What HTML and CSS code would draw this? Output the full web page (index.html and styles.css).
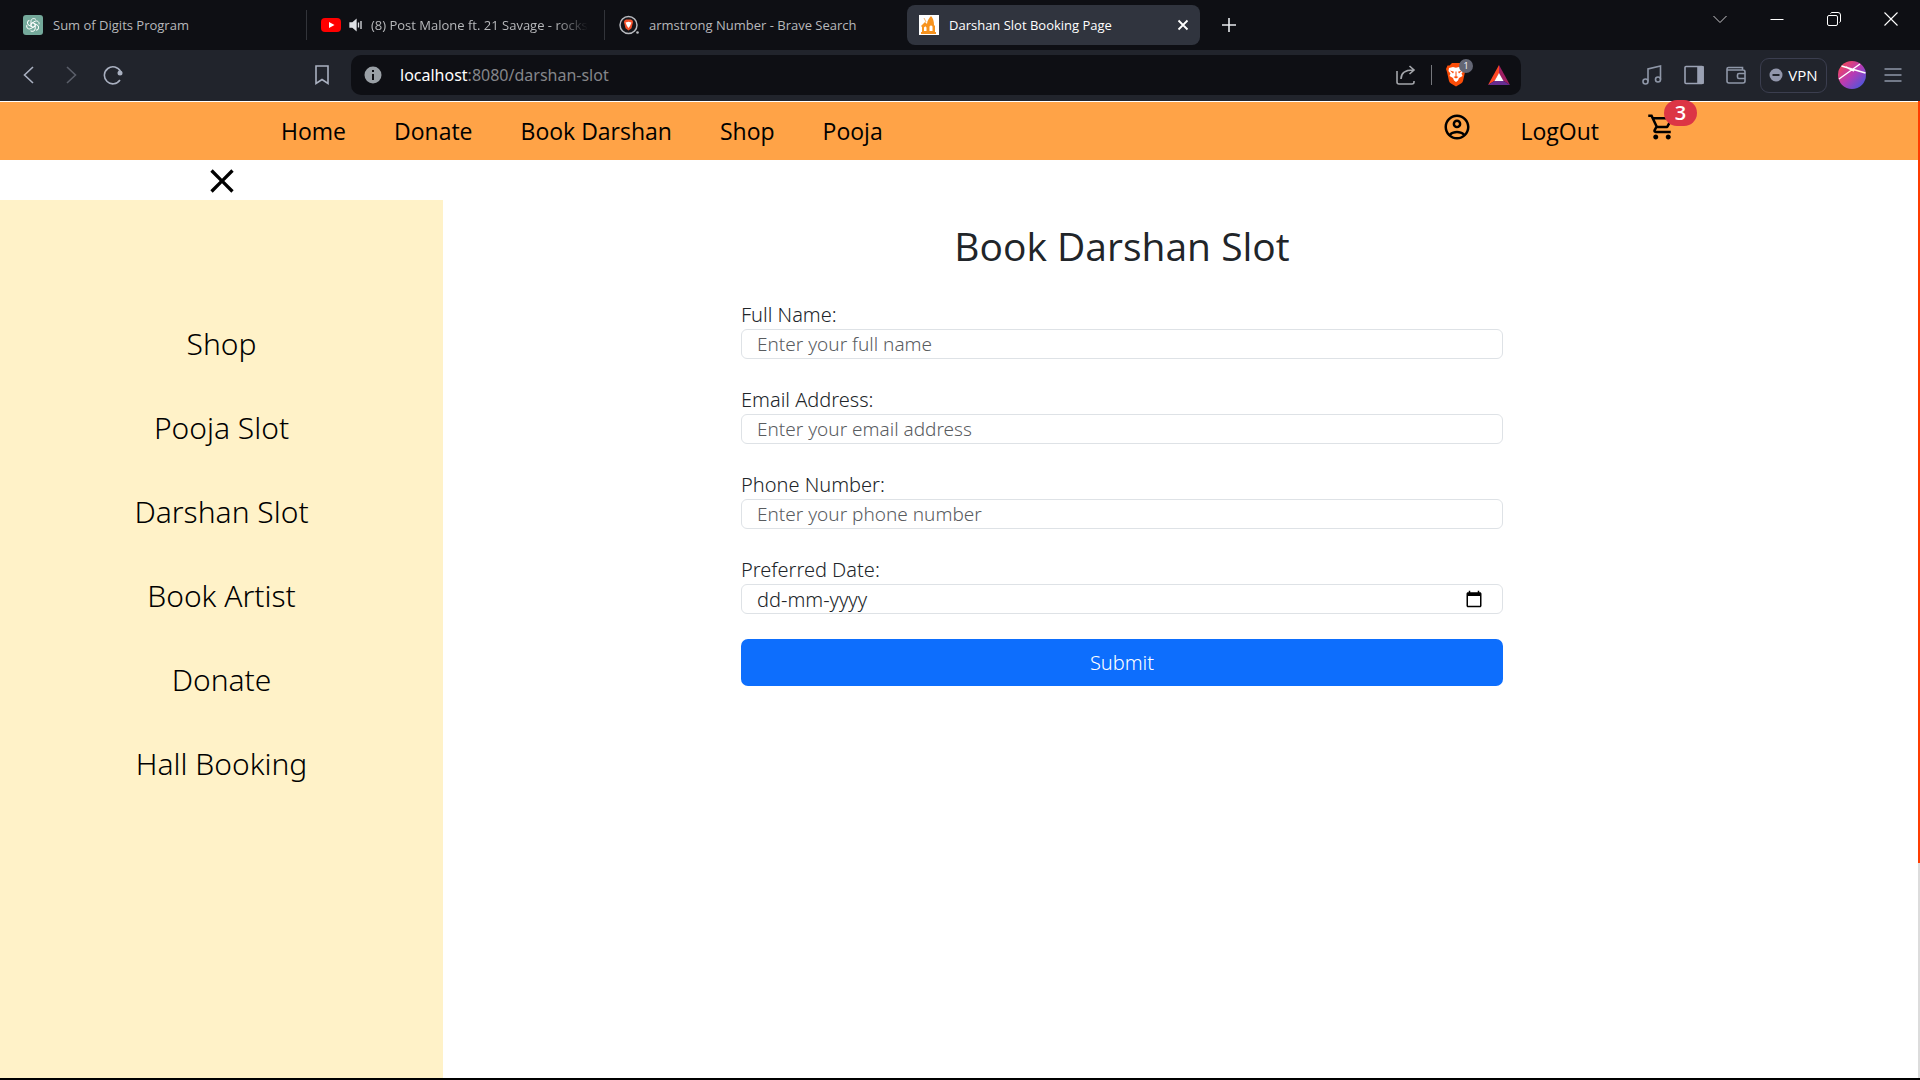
FILE: index.html
```html
<!DOCTYPE html>
<html lang="en">
<head>
<meta charset="utf-8">
<meta name="viewport" content="width=device-width, initial-scale=1">
<title>Darshan Slot Booking Page</title>
<link rel="stylesheet" href="styles.css">
</head>
<body>
<header class="browser">
  <div class="tabbar">
    <div class="tab">
      <svg width="20" height="20" viewBox="0 0 20 20" fill="none" stroke="#fff"><rect width="20" height="20" rx="3" fill="#74a99b" stroke="none"/><g stroke-width="1"><path id="petal" d="M8 10.8V6.2c0-2.6 3.4-3.6 5-1.5M8 8.6l4-2.3c2.2-1.2 4.6.8 4 3"/><use href="#petal" transform="rotate(120 10 10)"/><use href="#petal" transform="rotate(240 10 10)"/><path d="M10 7.7l2 1.2v2.3l-2 1.1-2-1.1V8.900z"/></g></svg>
      <span class="tab-title">Sum of Digits Program</span>
    </div>
    <div class="tab">
      <svg width="20" height="20" viewBox="0 0 20 20"><rect y="3" width="20" height="14" rx="4" fill="#f00"/><path d="M8 7l5.500 3L8 13z" fill="#fff"/></svg>
      <svg class="speaker" width="14" height="14" viewBox="0 0 14 14" fill="none" stroke="#dfe1e5" stroke-width="1.300"><path d="M1 5h2.500L7 2v10L3.500 9H1z" fill="#dfe1e5"/><path d="M9.500 4.500v5M12 3v8"/></svg>
      <span class="tab-title tab-title-fade">(8) Post Malone ft. 21 Savage - rockstar</span>
    </div>
    <div class="tab">
      <svg width="20" height="20" viewBox="0 0 20 20"><circle cx="9.500" cy="10" r="8.500" fill="#15161b" stroke="#b9bbc0" stroke-width="1.500"/><path d="M5.500 5.500l1.500-1h5l1.500 1 .6 1.500-1.600 6.200-3 2.200-3-2.200L4.900 7z" fill="#f4502a"/><path d="M6.500 7.500l3-.8 3 .8-1.500 3.500-1.500 2-1.500-2z" fill="#fff"/><circle cx="18.500" cy="17.500" r="1.300" fill="#b9bbc0"/></svg>
      <span class="tab-title">armstrong Number - Brave Search</span>
    </div>
    <div class="tab tab-active">
      <svg width="20" height="20" viewBox="0 0 20 20"><path fill="#fff" d="M0 0h20v20H0z"/><path d="M2 19v-2h1v-5l-1-1 4-4 2 2C8 6 10 3 12 1c2 2 3 5 3 9l1 1v6h1v2zM5 12.500V16h2.500v-3.500l-1.200-1.200zM10.500 11.500V16h3v-4.500l-1.500-1.200z" fill="#f7931e" fill-rule="evenodd"/><path d="M5 3l2 4" stroke="#f7b469"/></svg>
      <span class="tab-title">Darshan Slot Booking Page</span>
      <button class="icon-button" aria-label="Close tab"><svg width="16" height="16" viewBox="0 0 16 16" stroke="#fff" stroke-width="1.800"><path d="M3.500 3.500l9 9M12.500 3.500l-9 9"/></svg></button>
    </div>
    <button class="icon-button new-tab" aria-label="New tab"><svg width="16" height="16" viewBox="0 0 16 16" stroke="#e8eaed" stroke-width="1.600"><path d="M8 1v14M1 8h14"/></svg></button>
    <div class="window-controls">
      <button class="icon-button" aria-label="Search tabs"><svg width="14" height="14" viewBox="0 0 14 14" fill="none" stroke="#c8c8ca"><path d="M.5 4l6.500 6.500L13.500 4"/></svg></button>
      <button class="icon-button" aria-label="Minimize"><svg width="14" height="14" viewBox="0 0 14 14" stroke="#fff"><path d="M.5 7.500h13"/></svg></button>
      <button class="icon-button" aria-label="Restore"><svg width="14" height="14" viewBox="0 0 14 14" fill="none" stroke="#fff"><rect x=".5" y="3.500" width="10" height="10" rx="1.500"/><path d="M3.500 1.500q.5-1 1.500-1h6q2.500 0 2.500 2.500v6q0 1-1 1.500"/></svg></button>
      <button class="icon-button" aria-label="Close"><svg width="14" height="14" viewBox="0 0 14 14" stroke="#fff" stroke-width="1.100"><path d="M.5.5l13 13M13.500.5l-13 13"/></svg></button>
    </div>
  </div>
  <div class="toolbar">
    <div class="nav-buttons">
      <button class="icon-button" aria-label="Back"><svg width="20" height="20" viewBox="0 0 20 20" fill="none" stroke="#a9b0c0" stroke-width="1.600"><path d="M14 2l-8.500 8L14 18"/></svg></button>
      <button class="icon-button" aria-label="Forward"><svg width="20" height="20" viewBox="0 0 20 20" fill="none" stroke="#5a5e69" stroke-width="1.600"><path d="M6 2l8.500 8L6 18"/></svg></button>
      <button class="icon-button" aria-label="Reload"><svg width="20" height="20" viewBox="0 0 20 20" fill="none" stroke="#a9b0c0" stroke-width="1.600"><path d="M17.500 6.500A8.500 8.500 0 1 0 17 15"/><circle cx="17" cy="8" r="2.500" fill="#a9b0c0" stroke="none"/></svg></button>
    </div>
    <button class="icon-button bookmark" aria-label="Bookmark"><svg width="20" height="20" viewBox="0 0 20 20" fill="none" stroke="#a9b0c0" stroke-width="1.600"><path d="M4 1h12v17.500l-6-4-6 4z"/></svg></button>
    <div class="address">
      <svg width="18" height="18" viewBox="0 0 18 18"><circle cx="9" cy="9" r="8.500" fill="#9aa0a6"/><path d="M8 4h2v2H8zM8 8h2v6H8z" fill="#0e0f14"/></svg>
      <span class="url"><span class="url-host">localhost</span>:8080/darshan-slot</span>
      <button class="icon-button" aria-label="Share"><svg width="20" height="20" viewBox="0 0 20 20" fill="none" stroke="#a4a6ab" stroke-width="1.600"><path d="M1 6v11q0 2 2 2h13q2 0 2-2v-1M5 14c0-6 4-9 12-9M13.500 1L18 5l-4.500 4"/></svg></button>
      <span class="divider"></span>
      <button class="icon-button shield" aria-label="Brave Shields">
        <svg width="20" height="24" viewBox="0 0 20 24"><path d="M3.500 2.500L6 0h8l2.500 2.500h2L20 6l-1 3-2 9q-.5 1.500-2 2.500l-5 3-5-3q-1.500-1-2-2.500L1 9 0 6l1.500-3.500z" fill="#fb4d08"/><path d="M3 5l4-1 3 .8L13 4l4 1 .5 3-2 2.500 1 2.500-3.500 2-1 2.500-2 1.500-2-1.500L7 15l-3.500-2 1-2.500L2.500 8z" fill="#fff"/><path d="M4 7.500l4 1.200L7 10.500zM16 7.500l-4 1.200 1 1.800zM7.500 14l2.500-1 2.500 1-2.500 1.500zM9.500 8.500h1V13h-1z" fill="#fb4d08"/></svg>
        <span class="shield-count">1</span>
      </button>
      <button class="icon-button rewards" aria-label="Brave Rewards"><svg width="22" height="20" viewBox="0 0 22 20"><path d="M11 0L0 20l7-4.500 4-7z" fill="#ff4724"/><path d="M11 0l11 20-7-4.500-4-7z" fill="#9e1f63"/><path d="M0 20h22l-7-4.500H7z" fill="#662d91"/><path d="M11 8l4.500 8h-9z" fill="#fff"/></svg></button>
    </div>
    <div class="tools">
      <button class="icon-button" aria-label="Playlist"><svg width="20" height="20" viewBox="0 0 20 20" fill="none" stroke="#8f97a8" stroke-width="1.600"><circle cx="3.500" cy="16.500" r="2.500"/><circle cx="16" cy="14.500" r="2.500"/><path d="M6 16.500V4l12.500-3v13.500"/></svg></button>
      <button class="icon-button" aria-label="Sidebar"><svg width="20" height="20" viewBox="0 0 20 20" fill="none" stroke="#9aa1b3" stroke-width="1.600"><rect x="1" y="1.500" width="18" height="17" rx="1"/><path d="M14 2h5v16h-5z" fill="#9aa1b3"/></svg></button>
      <button class="icon-button" aria-label="Wallet"><svg width="20" height="20" viewBox="0 0 20 20" fill="none" stroke="#8f97a8" stroke-width="1.600"><path d="M16.500 5V2.500h-14Q1 2.500 1 4v12q0 2 2 2h14q2 0 2-2V7q0-2-2-2H1.500M19 8.500h-6q-1.500 0-1.500 1.500v2q0 1.500 1.500 1.500h6"/></svg></button>
      <button class="vpn"><svg width="14" height="14" viewBox="0 0 14 14"><circle cx="7" cy="7" r="6.500" fill="#9296ab"/><path d="M3.500 6h7v2h-7z" fill="#21242c"/></svg>VPN</button>
      <button class="icon-button" aria-label="Profile"><svg width="28" height="28" viewBox="0 0 28 28"><defs><linearGradient id="avatar" x1="0" y1="0" x2="1" y2="1"><stop offset=".1" stop-color="#f4475b"/><stop offset=".5" stop-color="#b73bb5"/><stop offset=".9" stop-color="#4a57dc"/></linearGradient></defs><circle cx="14" cy="14" r="14" fill="url(#avatar)"/><path d="M3.500 5l24 7M1 18L22 3M8 6l8 4" stroke="#fff" stroke-width="1.500"/></svg></button>
      <button class="icon-button" aria-label="Menu"><svg width="18" height="18" viewBox="0 0 18 18" stroke="#8f97a8" stroke-width="1.600"><path d="M.5 3h17M.5 9h17M.5 15h17"/></svg></button>
    </div>
  </div>
</header>
<div class="page">
  <nav class="navbar">
    <div class="nav-group">
      <a href="#">Home</a><a href="#">Donate</a><a href="#">Book Darshan</a><a href="#">Shop</a><a href="#">Pooja</a>
    </div>
    <div class="nav-group nav-account">
      <a href="#" class="nav-icon" aria-label="Account"><svg width="30" height="30" viewBox="0 0 24 24"><path d="M12 2C6.480 2 2 6.480 2 12s4.480 10 10 10 10-4.480 10-10S17.520 2 12 2zM7.350 18.500C8.660 17.560 10.260 17 12 17s3.340.56 4.650 1.500C15.340 19.440 13.740 20 12 20s-3.340-.56-4.650-1.500zm10.790-1.380C16.450 15.800 14.320 15 12 15s-4.450.8-6.140 2.120C4.700 15.730 4 13.950 4 12c0-4.420 3.580-8 8-8s8 3.580 8 8c0 1.950-.7 3.730-1.860 5.120zM12 6c-1.930 0-3.500 1.570-3.500 3.500S10.070 13 12 13s3.500-1.570 3.500-3.500S13.930 6 12 6zm0 5c-.83 0-1.500-.67-1.500-1.500S11.170 8 12 8s1.500.67 1.500 1.500S12.830 11 12 11z"/></svg></a>
      <a href="#">LogOut</a>
      <a href="#" class="nav-icon cart" aria-label="Cart, 3 items"><svg width="30" height="30" viewBox="0 0 24 24"><path d="M15.550 13c.75 0 1.410-.41 1.750-1.030l3.580-6.490A.996.996 0 0 0 20.010 4H5.210l-.94-2H1v2h2l3.600 7.590-1.350 2.440C4.520 15.370 5.480 17 7 17h12v-2H7l1.100-2h7.450zM6.160 6h12.150l-2.760 5H8.530L6.160 6zM7 18c-1.100 0-1.990.9-1.990 2S5.900 22 7 22s2-.9 2-2-.9-2-2-2zm10 0c-1.100 0-1.990.9-1.990 2s.89 2 1.990 2 2-.9 2-2-.9-2-2-2z"/></svg><span class="cart-count">3</span></a>
    </div>
  </nav>
  <div class="layout">
    <aside class="sidebar">
      <button class="sidebar-close" aria-label="Close menu"><svg width="40" height="40" viewBox="0 0 24 24"><path d="M19 6.410L17.590 5 12 10.590 6.410 5 5 6.410 10.590 12 5 17.590 6.410 19 12 13.410 17.590 19 19 17.590 13.410 12z"/></svg></button>
      <nav class="sidebar-menu">
        <a href="#">Shop</a><a href="#">Pooja Slot</a><a href="#">Darshan Slot</a><a href="#">Book Artist</a><a href="#">Donate</a><a href="#">Hall Booking</a>
      </nav>
    </aside>
    <main class="content">
      <form class="booking">
        <h1>Book Darshan Slot</h1>
        <div class="field"><label for="name">Full Name:</label><input id="name" type="text" placeholder="Enter your full name"></div>
        <div class="field"><label for="email">Email Address:</label><input id="email" type="email" placeholder="Enter your email address"></div>
        <div class="field"><label for="phone">Phone Number:</label><input id="phone" type="tel" placeholder="Enter your phone number"></div>
        <div class="field"><label for="date">Preferred Date:</label>
          <div class="date-box"><input id="date" type="text" placeholder="dd-mm-yyyy"><button type="button" class="icon-button date-button" aria-label="Choose date"><svg width="18" height="18" viewBox="0 0 24 24"><path d="M20 3h-1V1h-2v2H7V1H5v2H4c-1.100 0-2 .9-2 2v16c0 1.100.9 2 2 2h16c1.100 0 2-.9 2-2V5c0-1.100-.9-2-2-2zm0 18H4V8h16v13z"/></svg></button></div>
        </div>
        <button class="submit" type="submit">Submit</button>
      </form>
    </main>
  </div>
  <div class="scroll-thumb"></div>
</div>
</body>
</html>
```
FILE: styles.css
```css
* { box-sizing: border-box; }

body {
  margin: 0;
  min-height: 100vh;
  display: flex;
  flex-direction: column;
  background: #fff;
  border-bottom: 2px solid #000;
  font-family: "Noto Sans", "Open Sans", sans-serif;
  font-weight: 300;
  color: #212529;
}

svg { display: block; flex: none; }
a { color: #000; text-decoration: none; }
button, input { font: inherit; color: inherit; }

.icon-button {
  display: flex;
  align-items: center;
  justify-content: center;
  flex: none;
  padding: 0;
  border: 0;
  background: none;
}

/* Browser window */
.browser { font-family: "Open Sans", "Noto Sans", sans-serif; font-weight: 400; }

.tabbar {
  display: flex;
  height: 50px;
  padding-left: 9px;
  background: #0e0f14;
}
.tab {
  display: flex;
  align-items: center;
  flex: 0 1 298px;
  min-width: 0;
  gap: 10px;
  padding: 0 16px 0 14px;
  margin: 10px 0;
  border-right: 1px solid #32343a;
  color: #b7b8bb;
  font-size: 13px;
}
.tab:nth-child(3) { border-right: 0; }
.tab-active {
  flex-basis: 293px;
  margin: 5px 0 5px 4px;
  padding: 0 9px 0 12px;
  border: 0;
  border-radius: 8px;
  background: #30343e;
  color: #fff;
}
.tab-title { flex: 1; overflow: hidden; white-space: nowrap; }
.tab-title-fade {
  -webkit-mask-image: linear-gradient(to right, #000 85%, transparent);
  mask-image: linear-gradient(to right, #000 85%, transparent);
}
.speaker { margin: 0 -2px; }
.new-tab { margin-left: 21px; }
.window-controls { display: flex; gap: 43px; margin-left: auto; padding-right: 22px; height: 37px; }

.toolbar {
  display: flex;
  align-items: center;
  height: 51px;
  padding: 0 18px 1px 19px;
  background: #21242c;
}
.nav-buttons { display: flex; gap: 22px; }
.bookmark { margin: 0 19px 0 auto; }
.address {
  display: flex;
  align-items: center;
  flex: 0 1 1170px;
  min-width: 0;
  height: 40px;
  padding: 0 11px 0 13px;
  border-radius: 10px;
  background: #0e0f14;
}
.url { flex: 1; margin-left: 18px; font-family: "Noto Sans", sans-serif; font-size: 16px; color: #85868a; }
.url-host { color: #fff; }
.divider { width: 1px; height: 20px; margin: 0 14px 0 15px; background: #75777c; }
.shield { position: relative; }
.shield-count {
  position: absolute;
  top: -4px;
  left: 13px;
  width: 14px;
  height: 14px;
  border-radius: 7px;
  background: #636674;
  color: #fff;
  font-size: 9px;
  line-height: 14px;
}
.rewards { margin-left: 22px; }
.tools { display: flex; align-items: center; margin-left: 121px; gap: 14px; }
.tools .icon-button:nth-child(-n+2) { margin-right: 8px; }
.tools .icon-button:last-child { margin-left: 4px; }
.vpn {
  display: flex;
  align-items: center;
  justify-content: center;
  gap: 5px;
  width: 67px;
  height: 35px;
  padding: 0;
  border: 1px solid #3b3e4f;
  border-radius: 9px;
  background: none;
  color: #fff;
  font-size: 15px;
}
.tools .vpn { margin-right: -3px; }

/* Web page */
.page {
  position: relative;
  display: flex;
  flex-direction: column;
  flex: 1;
  padding: 1px 2px 0 0;
}
.scroll-thumb {
  position: absolute;
  top: 0;
  right: 0;
  width: 2px;
  height: 100%;
  background: linear-gradient(#ff3c00 78%, #dcdcdc 78%);
}

.navbar {
  display: flex;
  justify-content: space-between;
  align-items: center;
  height: 58px;
  padding: 0 241px 0 281px;
  background: #ffa347;
  font-family: "Open Sans", "Noto Sans", sans-serif;
  font-size: 23px;
  font-weight: 400;
}
.nav-group { display: flex; align-items: center; gap: 48px; }
.nav-icon { padding-bottom: 8px; }
.cart { position: relative; }
.cart-count {
  position: absolute;
  top: -12px;
  left: 17px;
  width: 33px;
  height: 26px;
  border-radius: 13px;
  background: #dc3545;
  color: #fff;
  font-size: 20px;
  font-weight: 600;
  line-height: 26px;
  text-align: center;
}

.layout { display: flex; flex: 1; }
.sidebar { display: flex; flex-direction: column; flex: 0 0 443px; }
.sidebar-close {
  display: flex;
  align-items: center;
  justify-content: center;
  height: 40px;
  padding: 1px 0 0;
  border: 0;
  background: none;
}
.sidebar-menu {
  display: flex;
  flex-direction: column;
  align-items: center;
  flex: 1;
  gap: 44px;
  padding-top: 124px;
  background: #fff2c8;
  font-size: 30px;
  line-height: 40px;
}

.content { flex: 1; padding: 60px 24px 0 298px; }
.booking { max-width: 762px; font-size: 20px; line-height: 28px; }
.booking h1 {
  margin: 0 0 27px;
  font-family: "Open Sans", "Noto Sans", sans-serif;
  font-size: 39px;
  line-height: 52px;
  font-weight: 400;
  text-align: center;
}
.field { display: flex; flex-direction: column; margin-bottom: 25px; padding-top: 2px; }
.booking input {
  width: 100%;
  height: 30px;
  padding: 0 15px;
  border: 1px solid #dee2e6;
  border-radius: 6px;
  background: #fff;
  font-size: 19px;
}
.booking input::placeholder { color: #595c5f; opacity: 1; }
.date-box { position: relative; }
.booking .date-box input { font-size: 20px; }
.booking .date-box input::placeholder { color: #212529; }
.date-button { position: absolute; top: 6px; right: 20px; }
.submit {
  width: 100%;
  height: 47px;
  padding: 0;
  border: 0;
  border-radius: 7px;
  background: #0d6efd;
  color: #fff;
}
```
